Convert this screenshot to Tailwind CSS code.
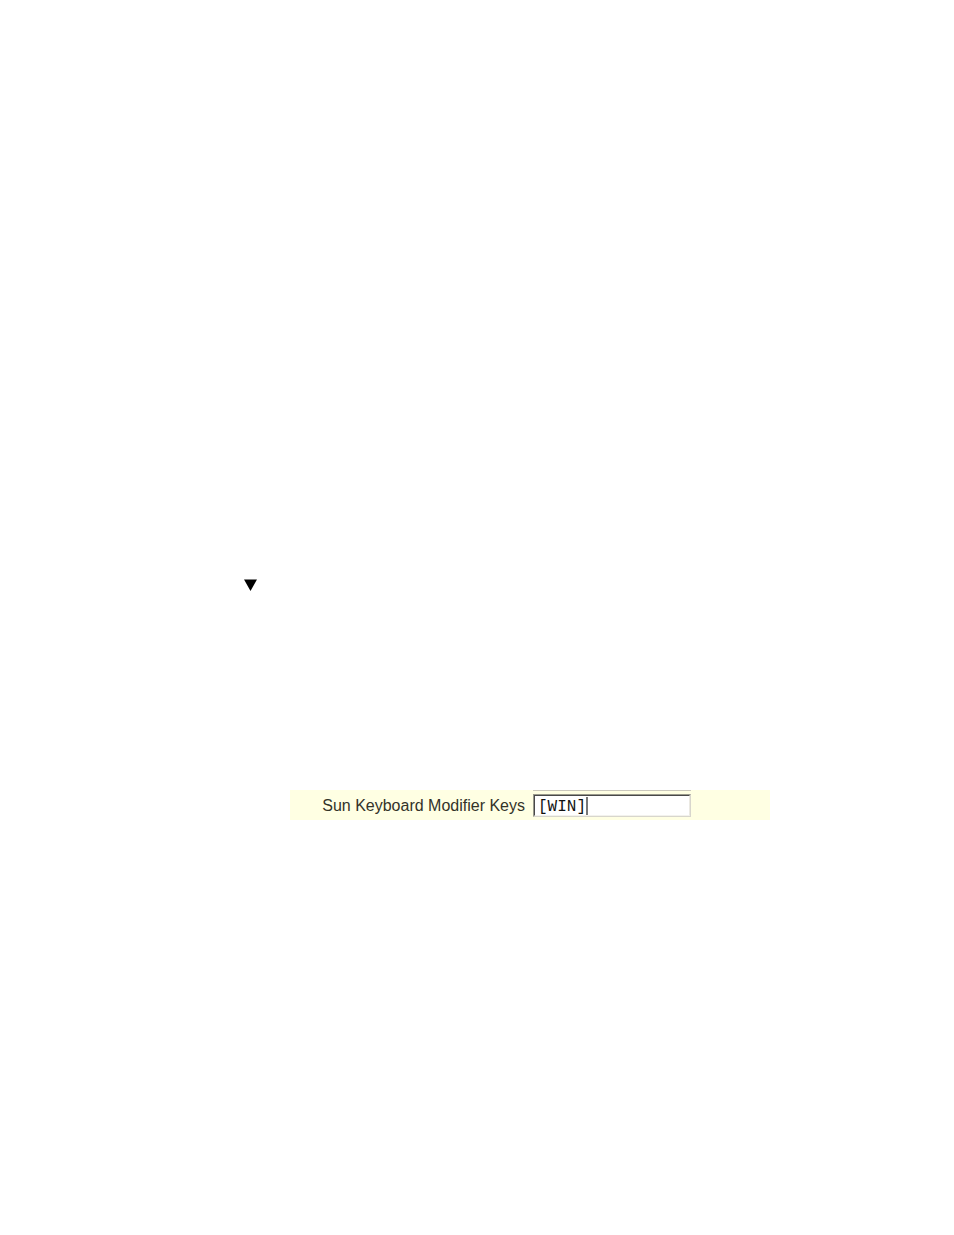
<!DOCTYPE html>
<html lang="en">
<head>
<meta charset="utf-8">
<title>Sun Keyboard Modifier Keys</title>
<script src="https://cdn.jsdelivr.net/npm/@tailwindcss/browser@4"></script>
</head>
<body class="min-h-screen bg-white font-['Liberation_Sans',sans-serif]">
<main class="pt-[579px] pr-[184px] pl-[244px]">
  <svg class="block h-3 w-[14px]" viewBox="0 0 14 12" aria-hidden="true"><path d="M0 0.5H13L6.5 12Z" fill="#000"/></svg>
  <form class="mt-[199px] ml-[46px] flex h-[30px] items-start bg-[#ffffe3]">
    <label for="modifier-keys" class="w-[243px] pr-2 text-right text-base leading-8 whitespace-nowrap text-[#333329]">Sun Keyboard Modifier Keys</label>
    <div class="relative w-[158px] border-t border-[#cbc8bd] pt-[3px]">
      <div class="border border-t-[#99998c] border-r-[#d8d6cd] border-b-[#d8d6cd] border-l-[#99998c]">
        <input id="modifier-keys" type="text" value="[WIN]" class="block h-[21px] w-full border border-t-[#494949] border-r-[#ebe9e2] border-b-[#f3f2ed] border-l-[#494949] bg-white pt-[2px] pl-[3px] font-['Liberation_Mono',monospace] text-base leading-4 text-[#111111] outline-none">
      </div>
      <span class="absolute top-[6px] left-[53px] h-[18px] w-[2px] bg-[#777777]"></span>
    </div>
  </form>
</main>
</body>
</html>
